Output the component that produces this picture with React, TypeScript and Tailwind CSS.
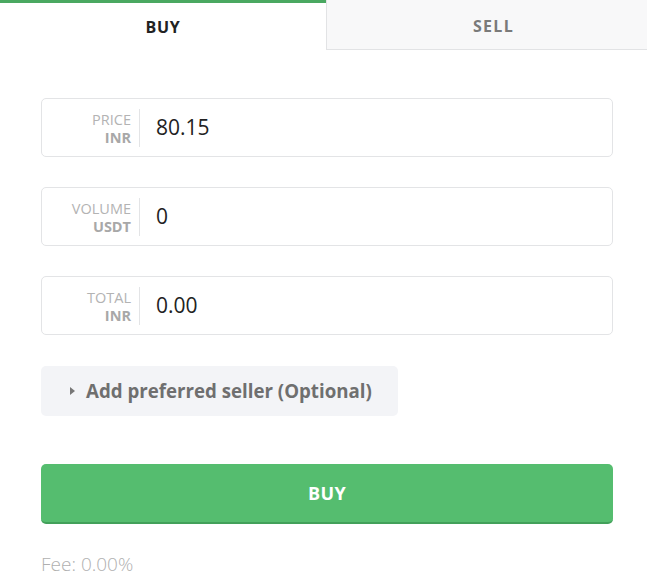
import { useState } from "react";

const font = { fontFamily: '"Open Sans", "Noto Sans", sans-serif' };

type FieldProps = { label: string; unit: string; value: string };

const Field = ({ label, unit, value }: FieldProps) => {
  return (
    <div className="flex items-center h-[59px] rounded-[5px] border border-[#e3e4e6] bg-white">
      <div className="w-[98px] flex flex-col items-end pr-[8px] border-r border-[#e3e4e6] h-[38px] justify-center leading-[18px] pt-[2px]">
        <span className="text-[14.5px] text-[#b3b3b3]">{label}</span>
        <span className="text-[14.5px] font-bold text-[#a8a8a8]">{unit}</span>
      </div>
      <input
        className="flex-1 pl-[16px] text-[21px] text-[#222] outline-none bg-transparent"
        defaultValue={value}
      />
    </div>
  );
};

export default function App() {
  const [tab, setTab] = useState<"buy" | "sell">("buy");

  return (
    <div className="w-[647px] h-[582px] bg-white overflow-hidden" style={font}>
      {/* Tabs */}
      <div className="flex h-[50px]">
        <button
          onClick={() => setTab("buy")}
          className={`w-[326px] border-t-[3px] pt-[1px] text-[16px] font-bold tracking-[0.05em] ${
            tab === "buy"
              ? "border-[#4aa861] bg-white text-[#222]"
              : "border-transparent bg-[#f8f8f8] text-[#777] border-b border-b-[#dfe0e2]"
          }`}
        >
          BUY
        </button>
        <button
          onClick={() => setTab("sell")}
          className={`flex-1 pt-[3px] pl-[13px] text-[16px] font-bold tracking-[0.08em] ${
            tab === "sell"
              ? "border-t-[3px] border-[#e05a5a] bg-white text-[#222]"
              : "bg-[#f8f8f9] text-[#7a7a7a] border-l border-b border-[#e2e3e5]"
          }`}
        >
          SELL
        </button>
      </div>

      {/* Form */}
      <div className="pl-[41px] pr-[34px] pt-[48px] flex flex-col">
        <div className="flex flex-col gap-[30px]">
          <Field label="PRICE" unit="INR" value="80.15" />
          <Field label="VOLUME" unit="USDT" value="0" />
          <Field label="TOTAL" unit="INR" value="0.00" />
        </div>

        <button className="mt-[31px] w-[357px] h-[50px] rounded-[5px] bg-[#f3f4f7] flex items-center pl-[29px] gap-[10px] text-[18.7px] font-bold text-[#6f6f6f]">
          <svg width="6" height="10" viewBox="0 0 6 10">
            <path d="M0 1 L5 5 L0 9 Z" fill="#777" />
          </svg>
          Add preferred seller (Optional)
        </button>

        <button className="mt-[48px] h-[60px] rounded-[5px] bg-[#55bd6f] border-b-[2px] border-[#42a05a] text-white text-[18px] font-bold tracking-[0.02em]">
          {tab === "buy" ? "BUY" : "SELL"}
        </button>

        <div className="mt-[26px] text-[19px] font-light text-[#b0b0b0]">Fee: 0.00%</div>
      </div>
    </div>
  );
}
